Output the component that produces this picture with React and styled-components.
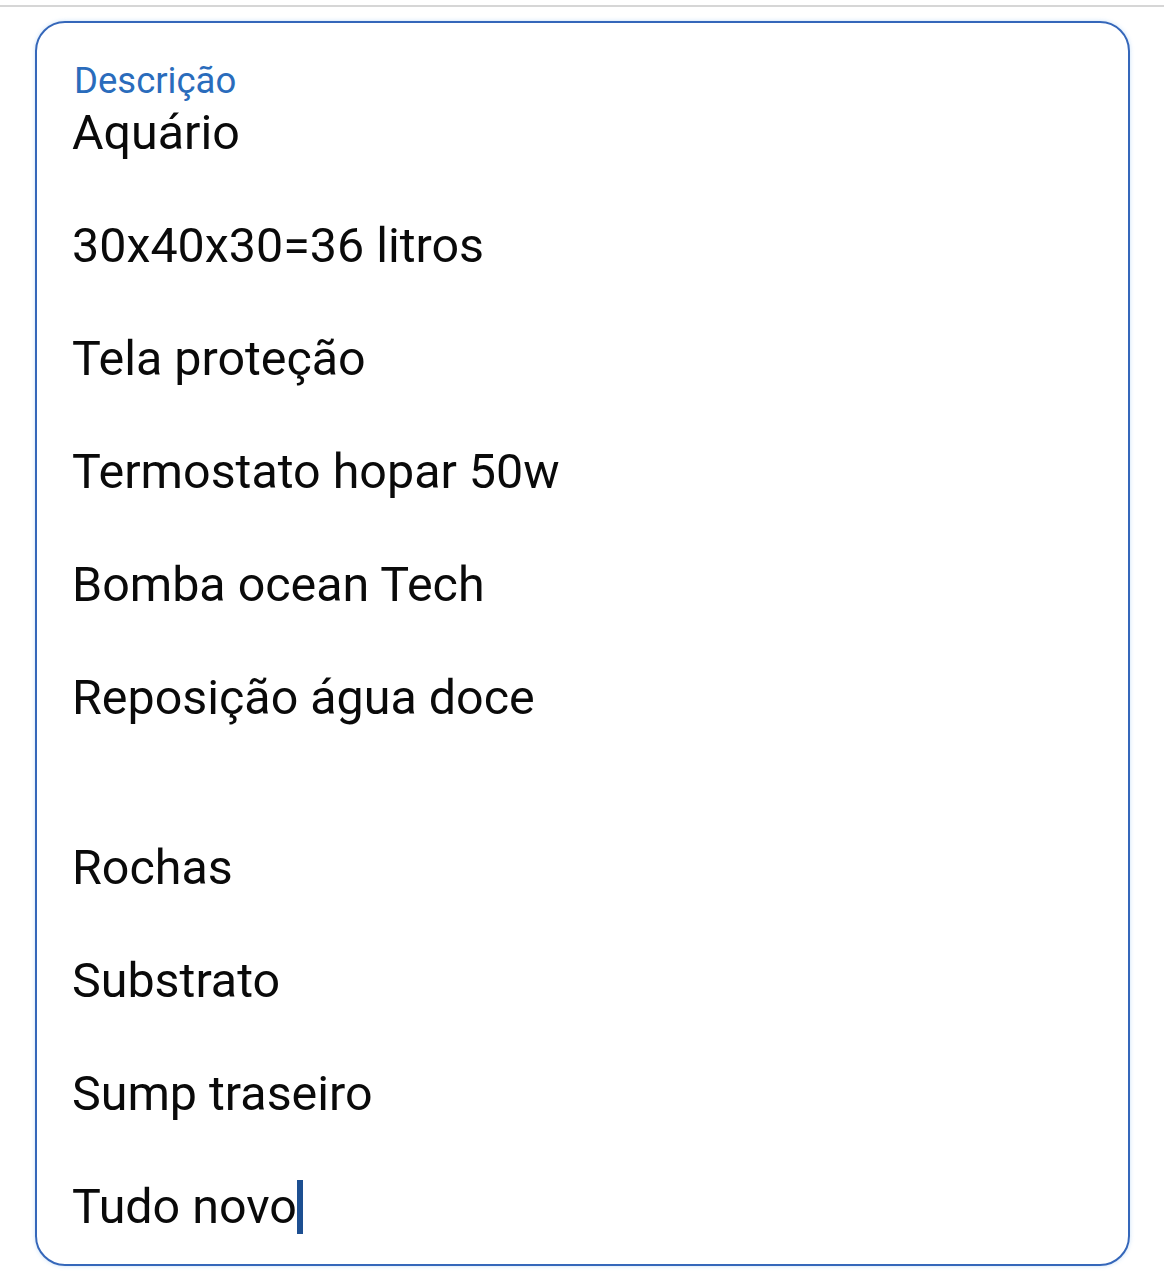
import React from 'react'
import styled, { createGlobalStyle } from 'styled-components'

const lines = [
	'Aquário',
	'',
	'30x40x30=36 litros',
	'',
	'Tela proteção',
	'',
	'Termostato hopar 50w',
	'',
	'Bomba ocean Tech',
	'',
	'Reposição água doce',
	'',
	'',
	'Rochas',
	'',
	'Substrato',
	'',
	'Sump traseiro',
	'',
	'Tudo novo',
]

const App = () => {
	return (
		<>
			<Global />
			<Page>
				<TopRule />
				<Field>
					<Label>Descrição</Label>
					<Body>
						{lines.map((line, i) => (
							<Line key={i}>
								{line || '\u00a0'}
								{i === lines.length - 1 && <Caret />}
							</Line>
						))}
					</Body>
				</Field>
			</Page>
		</>
	)
}

const Global = createGlobalStyle`
body{
  margin: 0;
  background: #ffffff;
  font-family: Roboto, "Noto Sans", "Liberation Sans", sans-serif;
}
`
const Page = styled.div`
	display: flex;
	flex-direction: column;
	height: 1280px;
	padding-top: 5px;
	box-sizing: border-box;
`
const TopRule = styled.div`
	height: 2px;
	background-color: #d6d6d6;
`
const Field = styled.div`
	margin: 14px 34px 0 35px;
	height: 1245px;
	box-sizing: border-box;
	border: 2.5px solid #3567ba;
	border-radius: 30px;
	padding: 38px 36px 0 35px;
	box-shadow: 0 0 4px rgba(120, 180, 240, 0.4);
`
const Label = styled.div`
	font-size: 36.5px;
	line-height: 40px;
	color: #2a6cbc;
	padding-left: 2px;
`
const Body = styled.div`
	margin-top: 4px;
	color: #0a0a0a;
	font-size: 48.4px;
`
const Line = styled.div`
	height: 56.5px;
	line-height: 56.5px;
	white-space: pre;
	display: flex;
	align-items: center;
`
const Caret = styled.span`
	display: inline-block;
	width: 6px;
	height: 54px;
	background-color: #1d4f91;
	margin-left: 0;
`

export default App
